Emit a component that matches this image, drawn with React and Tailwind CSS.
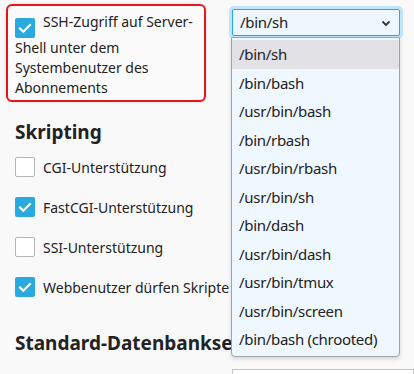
import React from 'react';

const shells = [
  '/bin/sh',
  '/bin/bash',
  '/usr/bin/bash',
  '/bin/rbash',
  '/usr/bin/rbash',
  '/usr/bin/sh',
  '/bin/dash',
  '/usr/bin/dash',
  '/usr/bin/tmux',
  '/usr/bin/screen',
  '/bin/bash (chrooted)',
];

const scripting = [
  { label: 'CGI-Unterstützung', checked: false },
  { label: 'FastCGI-Unterstützung', checked: true },
  { label: 'SSI-Unterstützung', checked: false },
  { label: 'Webbenutzer dürfen Skripte verwenden', checked: true },
];

function Checkbox({ checked }) {
  if (!checked) {
    return <span className="inline-block w-5 h-5 shrink-0 rounded-[2px] border border-[#b5b5b5] bg-white align-middle" />;
  }
  return (
    <span className="inline-flex w-5 h-5 shrink-0 items-center justify-center rounded-[2px] bg-[#28aae1] align-middle">
      <svg viewBox="0 0 20 20" className="w-5 h-5" fill="none" stroke="white" strokeWidth="2.2" strokeLinecap="square">
        <path d="M5 10.5l3.3 3.3L15 7" />
      </svg>
    </span>
  );
}

export default function App() {
  return (
    <div className="relative w-[414px] h-[374px] overflow-hidden bg-[#f9f9f9] text-[#222] font-['Noto_Sans',sans-serif]">
      {/* SSH row */}
      <div className="flex">
        <div className="w-[226px] shrink-0 pl-[6px] pt-[4px]">
          <div className="w-[200px] rounded-[6px] border-2 border-[#e8141c] bg-[#fbfbfb] px-[7px] pt-[6px] pb-[2px] text-[14px] leading-[20px] shadow-[0_0_3px_rgba(0,0,0,0.15)]">
            <span className="mr-2 inline-block align-[-5px]">
              <Checkbox checked />
            </span>
            SSH-Zugriff auf Server-Shell unter dem Systembenutzer des Abonnements
          </div>
        </div>

        <div className="relative z-10 pl-[6px] pt-[9px]">
          <div className="flex h-[27px] w-[168px] items-center justify-between rounded-[2px] border border-[#28a9e0] bg-[#eef7fd] pl-[7px] pr-[7px] text-[15px] tracking-[-0.3px] ring-[3px] ring-[#c3e4f8]">
            <span>/bin/sh</span>
            <svg viewBox="0 0 12 12" className="w-3 h-3" fill="none" stroke="#333" strokeWidth="1.8">
              <path d="M2.5 4.5l3.5 3.5 3.5-3.5" />
            </svg>
          </div>

          {/* open list */}
          <div className="absolute left-[5px] top-[37px] w-[169px] rounded-b-[4px] border border-[#a3a3a3] bg-[#f0f8ff] py-[2px] shadow-[0_2px_4px_rgba(0,0,0,0.15)]">
            {shells.map((s, i) => (
              <div
                key={s}
                className={`flex h-[28.5px] items-center pl-[7px] text-[15px] tracking-[-0.3px] whitespace-nowrap ${i === 0 ? 'bg-[#e1e1e6]' : ''}`}
              >
                {s}
              </div>
            ))}
          </div>
        </div>
      </div>

      {/* Skripting (clipped where the open list covers it) */}
      <div className="w-[231px] overflow-hidden pl-[15px] pt-[16px]">
        <h2 className="text-[19px] font-bold leading-[28px]">Skripting</h2>
        <div className="mt-[11px] flex flex-col gap-[20px]">
          {scripting.map((item) => (
            <div key={item.label} className="flex h-5 items-center gap-2 whitespace-nowrap text-[14px]">
              <Checkbox checked={item.checked} />
              <span>{item.label}</span>
            </div>
          ))}
        </div>
        <h2 className="mt-[32px] whitespace-nowrap text-[19px] font-bold leading-[28px]">Standard-Datenbankserver</h2>
      </div>

      <div className="flex pt-[12px]">
        <div className="w-[232px] shrink-0" />
        <div className="h-[30px] flex-1 border border-[#c5c5c5] bg-white" />
      </div>
    </div>
  );
}
